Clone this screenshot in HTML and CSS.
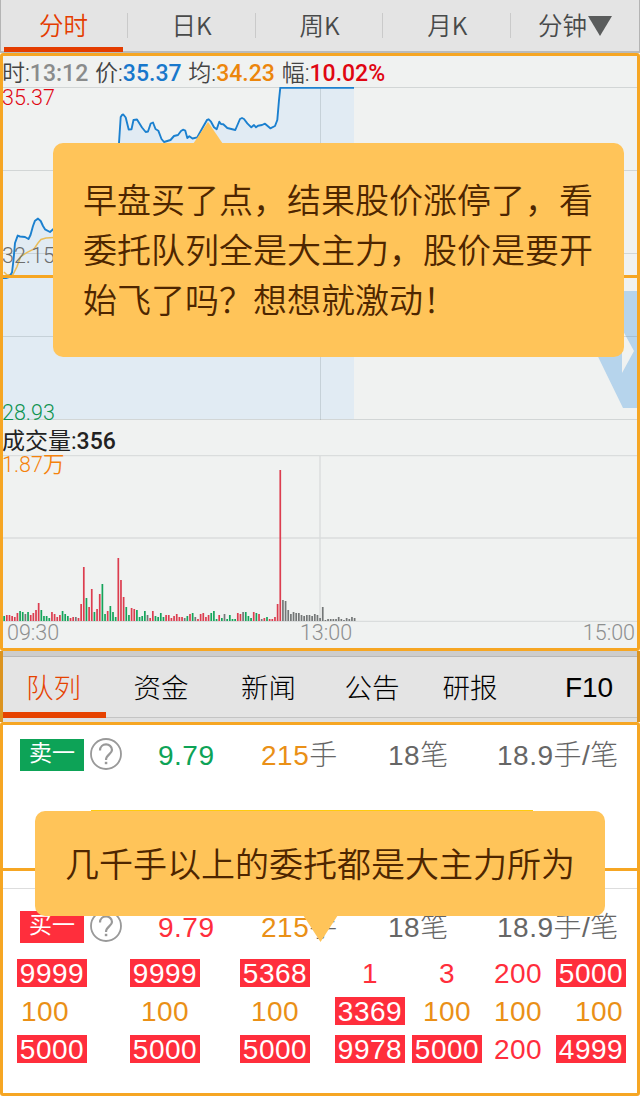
FILE: index.html
```
<!DOCTYPE html>
<html lang="zh-CN">
<head>
    <meta charset="UTF-8">
    <title>分时</title>
    <link rel="stylesheet" href="styles.css">
</head>
<body>
    <nav class="period-tabs">
        <div class="tab active">分时</div>
        <div class="tab">日K</div>
        <div class="tab">周K</div>
        <div class="tab">月K</div>
        <div class="tab">分钟<svg width="24" height="20" viewBox="0 0 24 20"><path d="M0 0H24L12 20Z" fill="#5a5c5c"/></svg></div>
    </nav>

    <section class="chart">
        <div class="quote">
            <span>时:<b class="gray">13:12</b></span>
            <span>价:<b class="blue">35.37</b></span>
            <span>均:<b class="orange">34.23</b></span>
            <span>幅:<b class="red">10.02%</b></span>
        </div>
        <div class="price">
            <svg width="634" height="333" viewBox="3 87 634 333">
                <!-- watermark -->
                <path d="M568 291H637V408H623L566 291Z M622 329V373L634 351Z" fill="#b6d4ec" fill-rule="evenodd"/>
                <path id="price-area" fill="#e1ebf3"/>
                <path d="M3 87.500H637M3 170.500H637M3 253.500H637M3 336.500H637M3 419.500H637M320.500 87V420" stroke="#788287" stroke-opacity=".25" fill="none"/>
                <path d="M4 272L7 275L13 274.500L17 266.600L20.700 256.600L26.700 252.600L34 249L38 243L41 239.500L46 238L54 237.500" stroke="#e9bd59" stroke-width="1.500" fill="none"/>
                <path id="price-line" stroke="#1b80cf" stroke-width="1.900" stroke-linejoin="round" fill="none"/>
            </svg>
            <span class="label high">35.37</span>
            <span class="label middle">32.15</span>
            <span class="label low">28.93</span>
            <div class="divider"></div>
        </div>
        <div class="volume-title">成交量:<b>356</b></div>
        <div class="volume">
            <svg width="634" height="167" viewBox="3 455 634 167">
                <path d="M3 455.500H637M3 538H637M3 621.500H637M320 455V621" stroke="#dadddd" stroke-width="1.400" fill="none"/>
                <g id="volume-bars"></g>
            </svg>
            <span class="label max">1.87万</span>
        </div>
        <div class="times"><span>09:30</span><span class="noon">13:00</span><span>15:00</span></div>
        <div class="bubble bubble-top">早盘买了点，结果股价涨停了，看<br>委托队列全是大主力，股价是要开<br>始飞了吗？想想就激动！</div>
    </section>

    <nav class="info-tabs">
        <div class="tab active">队列</div>
        <div class="tab">资金</div>
        <div class="tab">新闻</div>
        <div class="tab">公告</div>
        <div class="tab">研报</div>
        <div class="tab f10">F10</div>
    </nav>

    <section class="orders">
        <div class="sell">
            <div class="level">
                <span class="badge green-bg">卖一</span>
                <svg class="help" width="32" height="32" viewBox="0 0 32 32" fill="none" stroke="#999"><circle cx="16" cy="16" r="15" stroke-width="1.800"/><path d="M10 12.500C10 4.500 22 4.500 22 12C22 16 16 16.500 16 22" stroke-width="2.200"/><path d="M14.800 25H17.300" stroke-width="2.400"/></svg>
                <span class="cost green">9.79</span>
                <span class="lots"><i>215</i>手</span>
                <span class="count">18笔</span>
                <span class="avg">18.9手/笔</span>
            </div>
        </div>
        <div class="buy">
            <div class="level">
                <span class="badge red-bg">买一</span>
                <svg class="help" width="32" height="32" viewBox="0 0 32 32" fill="none" stroke="#999"><circle cx="16" cy="16" r="15" stroke-width="1.800"/><path d="M10 12.500C10 4.500 22 4.500 22 12C22 16 16 16.500 16 22" stroke-width="2.200"/><path d="M14.800 25H17.300" stroke-width="2.400"/></svg>
                <span class="cost pink">9.79</span>
                <span class="lots"><i>215</i>手</span>
                <span class="count">18笔</span>
                <span class="avg">18.9手/笔</span>
            </div>
            <div class="queue">
                <span class="big">9999</span><span class="big">9999</span><span class="big">5368</span><span class="pink">1</span><span class="pink">3</span><span class="pink">200</span><span class="big">5000</span>
                <span class="first">100</span><span>100</span><span>100</span><span class="big">3369</span><span>100</span><span>100</span><span class="last">100</span>
                <span class="big">5000</span><span class="big">5000</span><span class="big">5000</span><span class="big">9978</span><span class="big">5000</span><span class="pink">200</span><span class="big">4999</span>
            </div>
        </div>
        <div class="bubble bubble-bottom">几千手以上的委托都是大主力所为</div>
    </section>
    <script src="chart.js"></script>
</body>
</html>
```
FILE: styles.css
```
* {
    box-sizing: border-box;
}
body {
    margin: 0;
    width: 640px;
    background: #fff;
    font-family: Roboto, "Noto Sans CJK SC", sans-serif;
}
svg {
    display: block;
}
b {
    font-weight: 500;
}
i {
    font-style: normal;
}
.gray { color: #8a8c8c; }
.blue { color: #1878cc; }
.orange { color: #ec860c; }
.red { color: #e00612; }
.green { color: #0da357; }
.pink { color: #ff2e3c; }
.green-bg { background: #0da357; }
.red-bg { background: #ff2e3c; }

/* period tabs */
.period-tabs {
    display: flex;
    height: 53px;
    background: #e4e4e4;
    border-left: 1px solid #b4b4b4;
    border-right: 1px solid #b4b4b4;
    border-bottom: 2px solid #b9bbbc;
}
.period-tabs .tab {
    display: flex;
    justify-content: center;
    align-items: center;
    width: 128px;
    height: 52px;
    padding-bottom: 3px;
    font-family: "Noto Sans CJK SC", sans-serif;
    font-size: 24.500px;
    font-weight: 350;
    color: #484a4a;
    background: linear-gradient(#cacaca, #cacaca) right 13px / 1px 25px no-repeat;
}
.period-tabs .tab:last-child {
    background: none;
}
.period-tabs .active {
    width: 127px;
    padding-right: 2px;
    color: #e43c00;
    background: linear-gradient(#e43c00, #e43c00) 3px 47px / 119px 5px no-repeat,
        linear-gradient(#cacaca, #cacaca) right 13px / 1px 25px no-repeat;
}
.period-tabs .tab svg {
    margin: 3px 0 0 1px;
}

/* chart */
.chart {
    position: relative;
    height: 598px;
    border: 3px solid #f6a623;
    border-radius: 3px;
    background: #f0f2f1;
}
.quote {
    display: flex;
    gap: 6.800px;
    height: 31px;
    margin-left: -1px;
    line-height: 35px;
    font-size: 23px;
    font-weight: 350;
    color: #444;
    white-space: nowrap;
}
.price, .volume {
    position: relative;
}
.label {
    position: absolute;
    left: -1px;
    font-size: 21.500px;
    line-height: 22px;
    font-weight: 350;
}
.high {
    top: 0;
    color: #e00612;
}
.middle {
    top: 158px;
    color: #6c6e6e;
}
.low {
    top: 315px;
    color: #0d9350;
}
.max {
    top: -1px;
    color: #f5820c;
}
.divider {
    position: absolute;
    top: 188px;
    left: 0;
    width: 634px;
    height: 3px;
    background: #f6a623;
}
.volume-title {
    height: 35px;
    margin-left: -1px;
    padding-top: 8px;
    line-height: 27px;
    font-size: 23px;
    color: #222;
}
.times {
    display: flex;
    justify-content: space-between;
    padding: 0 2px 0 4px;
    line-height: 21px;
    font-size: 21.500px;
    font-weight: 350;
    color: #8d8f8f;
}
.noon {
    margin-left: 10px;
}

/* bubbles */
.bubble {
    position: absolute;
    z-index: 1;
    background: #ffc459;
    border-radius: 10px;
    color: #4e2600;
    font-family: "Noto Sans CJK SC", sans-serif;
    font-size: 34px;
    font-weight: 350;
    line-height: 50px;
    white-space: nowrap;
}
.bubble::before {
    content: "";
    position: absolute;
    background: #ffc459;
}
.bubble-top {
    left: 50px;
    top: 87px;
    width: 571px;
    height: 214px;
    padding: 31px 30px;
}
.bubble-top::before {
    left: 140px;
    top: -21px;
    width: 30px;
    height: 22px;
    clip-path: polygon(50% 0, 100% 100%, 0 100%);
}
.bubble-bottom {
    left: 32px;
    top: 86px;
    width: 570px;
    height: 105px;
    padding: 27px 30px;
}
.bubble-bottom::before {
    left: 268px;
    top: 104px;
    width: 35px;
    height: 27px;
    clip-path: polygon(0 0, 100% 0, 50% 100%);
}
.bubble-bottom::after {
    content: "";
    position: absolute;
    left: 56px;
    top: -1px;
    width: 442px;
    height: 1px;
    background: #ffcb0e;
}

/* info tabs */
.info-tabs {
    display: grid;
    grid-template-columns: 102px 112px 103px 104px 92px 121px;
    height: 71px;
    border: solid #dc9420;
    border-width: 0 3px;
    background: linear-gradient(#cdcdcd 5px, #b8b8b8 5px 6px, #e4e4e4 6px 66px, #c4c4c4 66px 67px, #e0e0e0 67px);
}
.info-tabs .tab {
    height: 67px;
    padding-top: 4px;
    line-height: 62px;
    text-align: center;
    font-family: "Noto Sans CJK SC", sans-serif;
    font-size: 27.500px;
    font-weight: 300;
    color: #000;
}
.info-tabs .active {
    width: 103px;
    padding-right: 2px;
    color: #e64200;
    border-bottom: 6px solid #e64200;
}
.info-tabs .f10 {
    padding: 6px 0 0 25px;
    font-family: "Liberation Sans", sans-serif;
    font-size: 28px;
}

/* orders */
.orders {
    position: relative;
    height: 374px;
    border: 3px solid #f6a623;
    border-radius: 3px;
    font-family: "Liberation Sans", "Noto Sans CJK SC", sans-serif;
    font-size: 28px;
    font-weight: 300;
    color: #666;
}
.sell {
    height: 146px;
    padding-top: 14px;
    border-bottom: 3px solid #f6a623;
}
.buy {
    padding-top: 40px;
    background: linear-gradient(#ddd, #ddd) 0 17px / 100% 1px no-repeat;
}
.level {
    display: grid;
    grid-template-columns: 70px 68px 103px 127px 109px 140px;
    height: 32px;
    padding-left: 17px;
    line-height: 34px;
    white-space: nowrap;
    letter-spacing: 0.500px;
}
.badge {
    width: 64px;
    height: 32px;
    line-height: 28px;
    text-align: center;
    font-size: 23px;
    font-weight: 400;
    letter-spacing: 0;
    color: #fff;
}
.help {
    margin-top: -1px;
}
.lots i {
    color: #ea9017;
}
.queue {
    display: grid;
    grid-template-columns: 113px 110px 95px 77px 71px 73px 70px;
    row-gap: 10px;
    margin: 16px 0 0 14px;
}
.queue span {
    width: 70px;
    height: 28px;
    line-height: 30px;
    text-align: center;
    letter-spacing: 0.500px;
    color: #ea9017;
}
.queue .pink {
    color: #ff2e3c;
}
.queue .big {
    background: #ff2e3c;
    color: #fff;
}
.queue .first {
    padding-right: 14px;
}
.queue .last {
    padding-left: 16px;
}
```
FILE: chart.js
```
const pricePoints = [
    [3, 278], [6, 278], [9, 277], [12, 272.5], [13.5, 260], [15, 243], [17.7, 235.6], [20, 236.5],
    [25, 237], [28.5, 239], [30.5, 235], [33, 226], [35, 220.7], [38, 218.6], [40.7, 221], [43, 226],
    [45, 229.3], [50, 232], [54, 228.5], [80, 200], [105, 175], [118.5, 160], [119, 143], [120.7, 117],
    [122, 115], [123.3, 114.5], [125.7, 117.5], [128.7, 129.5], [131.5, 129.3], [133.5, 120],
    [137, 119.5], [142, 127.5], [145.7, 132], [148, 131.5], [150.7, 123.5], [153, 122.5],
    [155.5, 129], [158.3, 130.7], [161.5, 139], [164, 142], [170.5, 140], [174, 136], [178, 135],
    [181, 131], [183, 129.7], [185.3, 130.7], [187.3, 138], [189.3, 136.3], [192.5, 138.5],
    [197.3, 137.3], [203, 127], [207, 120], [208.7, 119.3], [211, 121.7], [214, 127.3], [216.7, 129.3],
    [219.3, 121.7], [221, 124], [223.3, 124.3], [227.3, 128], [235.3, 130], [240, 119], [242, 118],
    [244, 119], [247.3, 123.3], [251.3, 127.3], [254, 125], [256, 127.3], [258, 125.7], [262, 125],
    [265, 123.7], [270.3, 128.3], [275, 126], [277.3, 120], [279, 100], [280.3, 87.7], [354, 87.7]
];
const line = "M" + pricePoints.map(p => p.join(" ")).join("L");
document.getElementById("price-line").setAttribute("d", line);
document.getElementById("price-area").setAttribute("d", line + "V419H3Z");

// r = up, g = down, k = unchanged
const volumes = ("g5 r6 r6 r5 r4 r8 g10 g9 k7 g9 r6 r8 r11 r18 g11 g5 g5 g3 r9 r7 r4 r6 g10 g7 g5 r3 r4 k4 r3 " +
    "r17 r54 g23 r14 r32 g9 r12 r27 g37 g7 r10 g15 g9 g4 r63 r41 r24 g14 g6 r13 r12 g11 g4 g5 g10 k6 r3 " +
    "r10 g5 g4 g8 g4 r6 r6 r3 r5 r7 r4 r4 k3 g5 r7 g8 k4 r2 r7 r8 r4 r6 g8 g10 g2 r6 g3 k7 g2 g6 g2 g2 " +
    "r8 r7 k9 g9 g5 g3 r9 g8 r7 k2 r3 g4 r2 r2 r4 r17 r151 k21 k20 k11 k7 k9 k8 k8 k6 k5 k6 k6 k5 k7 k6 " +
    "k3 k14 k1 k2 k2 k2 k2 k4 k2 k1 k3 k2 k4 k3").split(" ");
const colors = { r: "#dc3d4f", g: "#15a45a", k: "#747777" };
const bars = document.getElementById("volume-bars");
volumes.forEach((v, i) => {
    const h = Number(v.slice(1));
    const rect = document.createElementNS("http://www.w3.org/2000/svg", "rect");
    rect.setAttribute("x", (3.3 + i * 2.655).toFixed(2));
    rect.setAttribute("y", 621 - h);
    rect.setAttribute("width", 1.7);
    rect.setAttribute("height", h);
    rect.setAttribute("fill", colors[v[0]]);
    bars.appendChild(rect);
});
```
